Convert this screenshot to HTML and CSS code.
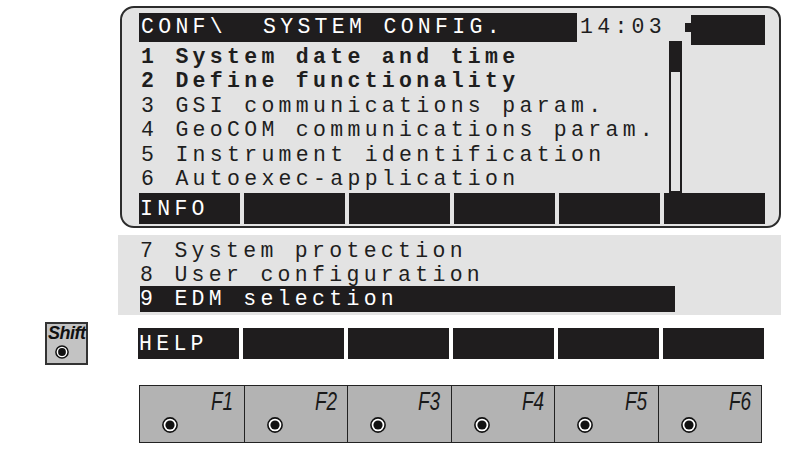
FILE: index.html
```html
<!DOCTYPE html>
<html>
<head>
<meta charset="utf-8">
<link rel="stylesheet" href="styles.css">
</head>
<body>
<div class="page">
  <div class="screen">
    <div class="titlerow">
      <div class="title"><span>CONF\</span><span class="sys">SYSTEM CONFIG.</span></div>
      <div class="clock">14:03</div>
      <div class="battery"><span class="nub"></span><span class="cell"></span></div>
    </div>
    <div class="body">
      <div class="list">
        <div class="line bold">1 System date and time</div>
        <div class="line bold">2 Define functionality</div>
        <div class="line">3 GSI communications param.</div>
        <div class="line">4 GeoCOM communications param.</div>
        <div class="line">5 Instrument identification</div>
        <div class="line">6 Autoexec-application</div>
      </div>
      <div class="scroll"><div class="thumb"></div></div>
    </div>
    <div class="keys">
      <div class="key">INFO</div><div class="key"></div><div class="key"></div><div class="key"></div><div class="key"></div><div class="key"></div>
    </div>
  </div>

  <div class="more">
    <div class="line">7 System protection</div>
    <div class="line">8 User configuration</div>
    <div class="line sel">9 EDM selection</div>
  </div>

  <div class="shiftrow">
    <div class="shift">
      <span class="shift-label">Shift</span>
      <svg class="shift-dot" width="14" height="14" viewBox="0 0 14 14"><circle cx="7" cy="7" r="6.1" fill="#fff" stroke="#111" stroke-width="1.5"/><circle cx="7" cy="7" r="3.9" fill="#111"/></svg>
    </div>
    <div class="keys help">
      <div class="key">HELP</div><div class="key"></div><div class="key"></div><div class="key"></div><div class="key"></div><div class="key"></div>
    </div>
  </div>

  <div class="fkeys">
    <div class="fkey"><span class="flabel">F1</span><svg class="dot" width="16" height="16" viewBox="0 0 16 16"><circle cx="8" cy="8" r="7.1" fill="#fff" stroke="#111" stroke-width="1.6"/><circle cx="8" cy="8" r="4.6" fill="#111"/></svg></div>
    <div class="fkey"><span class="flabel">F2</span><svg class="dot" width="16" height="16" viewBox="0 0 16 16"><circle cx="8" cy="8" r="7.1" fill="#fff" stroke="#111" stroke-width="1.6"/><circle cx="8" cy="8" r="4.6" fill="#111"/></svg></div>
    <div class="fkey"><span class="flabel">F3</span><svg class="dot" width="16" height="16" viewBox="0 0 16 16"><circle cx="8" cy="8" r="7.1" fill="#fff" stroke="#111" stroke-width="1.6"/><circle cx="8" cy="8" r="4.6" fill="#111"/></svg></div>
    <div class="fkey"><span class="flabel">F4</span><svg class="dot" width="16" height="16" viewBox="0 0 16 16"><circle cx="8" cy="8" r="7.1" fill="#fff" stroke="#111" stroke-width="1.6"/><circle cx="8" cy="8" r="4.6" fill="#111"/></svg></div>
    <div class="fkey"><span class="flabel">F5</span><svg class="dot" width="16" height="16" viewBox="0 0 16 16"><circle cx="8" cy="8" r="7.1" fill="#fff" stroke="#111" stroke-width="1.6"/><circle cx="8" cy="8" r="4.6" fill="#111"/></svg></div>
    <div class="fkey"><span class="flabel">F6</span><svg class="dot" width="16" height="16" viewBox="0 0 16 16"><circle cx="8" cy="8" r="7.1" fill="#fff" stroke="#111" stroke-width="1.6"/><circle cx="8" cy="8" r="4.6" fill="#111"/></svg></div>
  </div>
</div>
</body>
</html>
```

FILE: styles.css
```css
* { box-sizing: border-box; }

html, body {
  margin: 0;
  padding: 0;
  background: #ffffff;
}

.page {
  width: 788px;
  height: 453px;
  padding-top: 6px;
  overflow: hidden;
  font-family: "Courier New", "Nimbus Mono PS", "FreeMono", "Liberation Mono", monospace;
  font-size: 21.5px;
  letter-spacing: 4.3px;
  color: #1e1e1e;
}

.screen {
  margin-left: 120px;
  width: 661px;
  height: 222px;
  border: 2px solid #2c2c2c;
  border-radius: 14px;
  background: #e3e3e3;
  padding: 5px 0 0 17px;
  display: flex;
  flex-direction: column;
}

.titlerow {
  display: flex;
  align-items: flex-start;
  height: 29px;
}

.title {
  width: 438px;
  height: 29px;
  line-height: 29px;
  background: #1f1d1e;
  color: #ffffff;
  padding-left: 2px;
  white-space: pre;
}

.sys { margin-left: 36px; }

.clock {
  margin-left: 3px;
  line-height: 29px;
  white-space: pre;
}

.battery {
  display: flex;
  align-items: flex-start;
  margin-left: 19px;
}

.nub {
  display: block;
  width: 6px;
  height: 9px;
  margin-top: 10px;
  background: #1f1d1e;
}

.cell {
  display: block;
  width: 74px;
  height: 30px;
  margin-top: 2px;
  background: #1f1d1e;
}

.body {
  display: flex;
  height: 151px;
}

.list {
  width: 530px;
  padding: 3px 0 0 2px;
}

.line {
  height: 24.4px;
  line-height: 24.4px;
  white-space: pre;
}

.bold { font-weight: bold; }

.scroll {
  width: 13px;
  height: 152px;
  margin-top: -1px;
  border: 2px solid #1f1d1e;
}

.thumb {
  height: 29px;
  background: #1f1d1e;
}

.keys {
  display: grid;
  grid-template-columns: repeat(6, 101px);
  column-gap: 4px;
  height: 30px;
}

.key {
  background: #1f1d1e;
  color: #ffffff;
  line-height: 30px;
  padding: 1px 0 0 1px;
  white-space: pre;
}

.more {
  margin-left: 118px;
  margin-top: 7px;
  width: 663px;
  height: 80px;
  background: #e3e3e3;
  padding: 4px 0 0 22px;
}

.sel {
  width: 535px;
  height: 26px;
  line-height: 26px;
  margin-top: -2px;
  background: #1f1d1e;
  color: #ffffff;
}

.shiftrow {
  display: flex;
  align-items: flex-start;
  margin-top: 7px;
}

.shift {
  margin-left: 45px;
  width: 43px;
  height: 43px;
  border: 2px solid #333333;
  background: #c3c3c3;
  padding-left: 1px;
}

.shift-label {
  display: block;
  font-family: "Liberation Sans", Arial, sans-serif;
  font-weight: bold;
  font-style: italic;
  font-size: 18px;
  line-height: 18px;
  letter-spacing: -0.5px;
  color: #111111;
}

.shift-dot {
  display: block;
  margin: 3px 0 0 7px;
}

.help {
  margin-left: 50px;
  margin-top: 6px;
}

.fkeys {
  margin-left: 139px;
  margin-top: 20px;
  width: 623px;
  height: 58px;
  border: 1px solid #222222;
  background: #b3b3b3;
  display: grid;
  grid-template-columns: repeat(6, 1fr);
}

.fkey {
  display: flex;
  flex-direction: column;
  align-items: flex-start;
  padding: 3px 10px 0 22px;
  border-left: 1px solid #222222;
}

.fkey:first-child { border-left: none; }

.flabel {
  align-self: flex-end;
  display: inline-block;
  font-family: "Liberation Sans", Arial, sans-serif;
  font-style: italic;
  font-size: 25px;
  line-height: 24px;
  letter-spacing: 0;
  color: #1a1a1a;
  transform: scaleX(0.76);
  transform-origin: right center;
}

.dot {
  display: block;
  margin-top: 4px;
}
```
